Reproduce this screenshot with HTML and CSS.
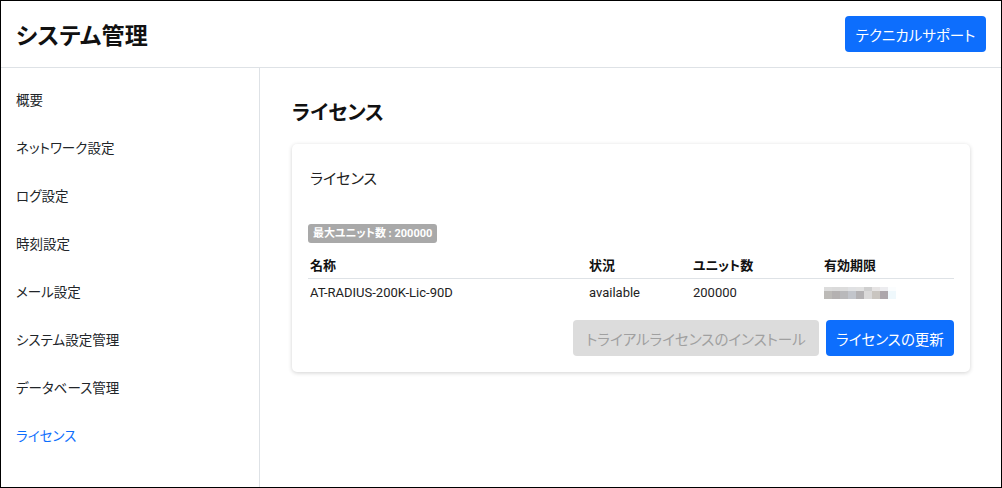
FILE: index.html
```html
<!DOCTYPE html>
<html lang="ja">
<head>
<meta charset="utf-8">
<title>システム管理</title>
<link rel="stylesheet" href="styles.css">
</head>
<body>
<div class="frame">
  <header class="topbar">
    <h1 class="app-title">システム管理</h1>
    <button class="btn btn-primary btn-support">テクニカルサポート</button>
  </header>
  <div class="layout">
    <nav class="sidebar">
      <a class="nav-item">概要</a>
      <a class="nav-item">ネットワーク設定</a>
      <a class="nav-item">ログ設定</a>
      <a class="nav-item">時刻設定</a>
      <a class="nav-item">メール設定</a>
      <a class="nav-item">システム設定管理</a>
      <a class="nav-item">データベース管理</a>
      <a class="nav-item active">ライセンス</a>
    </nav>
    <main class="content">
      <h2 class="page-title">ライセンス</h2>
      <section class="card">
        <h3 class="card-title">ライセンス</h3>
        <span class="badge">最大ユニット数 : 200000</span>
        <table class="table">
          <thead>
            <tr><th class="col-name">名称</th><th class="col-status">状況</th><th class="col-units">ユニット数</th><th>有効期限</th></tr>
          </thead>
          <tbody>
            <tr>
              <td>AT-RADIUS-200K-Lic-90D</td>
              <td>available</td>
              <td>200000</td>
              <td>
                <div class="blur">
                  <span style="background:#dcdcdc"></span><span style="background:#dadada"></span><span style="background:#dcdcdc"></span><span style="background:#e0e1e3"></span><span style="background:#e2e2e2"></span><span style="background:#cfcfcf"></span><span style="background:#e6e4e4"></span><span style="background:#ececef"></span><span style="background:#fbfdfe"></span>
                  <span style="background:#bcbab7"></span><span style="background:#b4b1b1"></span><span style="background:#b9b9bb"></span><span style="background:#c2c5cb"></span><span style="background:#b3b1b3"></span><span style="background:#dad9d9"></span><span style="background:#c9c5c0"></span><span style="background:#aca6ab"></span><span style="background:#eff8fc"></span>
                </div>
              </td>
            </tr>
          </tbody>
        </table>
        <div class="actions">
          <button class="btn btn-disabled" disabled>トライアルライセンスのインストール</button>
          <button class="btn btn-primary btn-update">ライセンスの更新</button>
        </div>
      </section>
    </main>
  </div>
</div>
</body>
</html>
```
FILE: styles.css
```css
* { box-sizing: border-box; }
html, body { margin: 0; padding: 0; }
body {
  font-family: "Noto Sans CJK JP", "Noto Sans", sans-serif;
  font-feature-settings: "palt";
  color: #212529;
  background: #fff;
}
.frame {
  width: 1002px;
  height: 488px;
  border: 1px solid #000;
  display: flex;
  flex-direction: column;
  overflow: hidden;
}
.topbar {
  height: 67px;
  flex: none;
  display: flex;
  align-items: center;
  justify-content: space-between;
  padding: 0 15px 0 15px;
  border-bottom: 1px solid #dee2e6;
}
.app-title {
  margin: 0;
  font-size: 23px;
  font-weight: 700;
  color: #111;
  letter-spacing: 0.2px;
}
.btn {
  font-family: inherit;
  font-feature-settings: "palt";
  border: none;
  border-radius: 4px;
  font-size: 14.5px;
  height: 36px;
  padding: 0;
  white-space: nowrap;
  cursor: pointer;
}
.btn-primary { background: #0d6efd; color: #fff; }
.btn-support { width: 141px; height: 36px; }
.btn-disabled { background: #dcdcdc; color: #a0a0a0; cursor: default; width: 246px; }
.btn-update { width: 128px; }
.layout {
  flex: 1;
  display: flex;
}
.sidebar {
  width: 259px;
  flex: none;
  border-right: 1px solid #dee2e6;
  display: flex;
  flex-direction: column;
  padding: 19px 0 0 15px;
}
.nav-item {
  height: 48px;
  line-height: 24px;
  font-size: 13.5px;
  color: #212529;
  text-decoration: none;
}
.nav-item.active { color: #0d6efd; }
.content {
  flex: 1;
  padding: 28px 31px 0 32px;
}
.page-title {
  margin: 0 0 16px;
  font-size: 20px;
  font-weight: 700;
  line-height: 32px;
  color: #111;
}
.card {
  width: 678px;
  border-radius: 5px;
  box-shadow: 0 1px 4px rgba(0,0,0,0.18);
  padding: 21px 16px 16px 16px;
}
.card-title {
  margin: 0 0 27px 2px;
  font-size: 15px;
  font-weight: 400;
  line-height: 26px;
  color: #222;
}
.badge {
  display: inline-block;
  background: #a9a9a9;
  color: #fff;
  font-size: 11px;
  font-weight: 700;
  line-height: 19px;
  padding: 0 5px;
  border-radius: 3px;
  font-family: "Roboto", "Noto Sans CJK JP", sans-serif;
}
.table {
  width: 100%;
  border-collapse: collapse;
  margin-top: 9px;
  font-size: 13px;
  font-family: "Roboto", "Noto Sans CJK JP", sans-serif;
}
.table th {
  text-align: left;
  font-weight: 700;
  padding: 5px 2px 3px;
  line-height: 18px;
  border-bottom: 1px solid #dee2e6;
  color: #111;
}
.table td {
  padding: 5px 2px 5px;
  line-height: 18px;
  color: #222;
}
.col-name { width: 279px; }
.col-status { width: 104px; }
.col-units { width: 131px; }
.blur {
  display: grid;
  grid-template-columns: repeat(9, 8px);
  grid-template-rows: 4px 8px;
  width: 72px;
}
.blur span { display: block; }
.actions {
  display: flex;
  justify-content: flex-end;
  gap: 7px;
  margin-top: 13px;
}
```
